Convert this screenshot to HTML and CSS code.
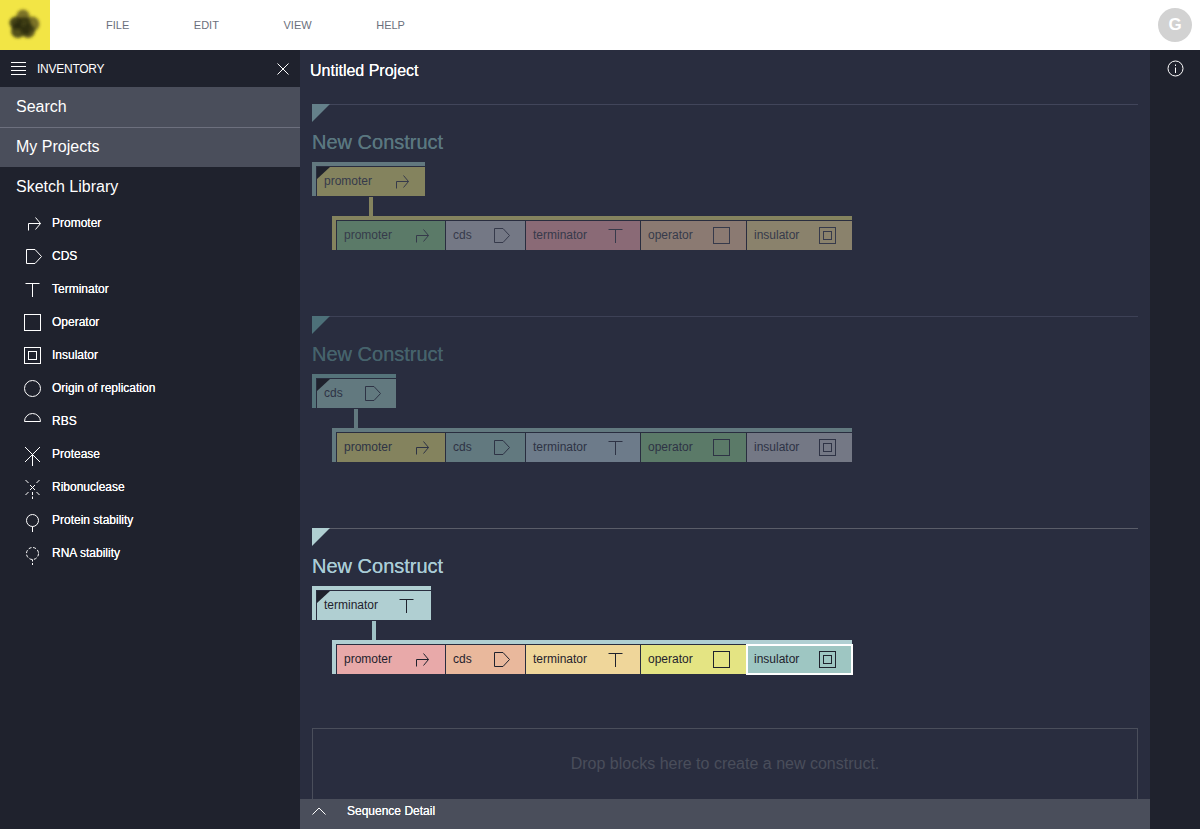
FILE: index.html
```html
<!DOCTYPE html>
<html lang="en">

<head>
  <title>Untitled Project</title>
  <meta charset="UTF-8">
  <meta name="viewport" content="width=device-width, initial-scale=1">
  <link rel="stylesheet" href="styles.css">
</head>

<body>

  <!-- icon set, used by the sidebar and the blocks -->
  <svg class="icon-defs" xmlns="http://www.w3.org/2000/svg">
    <symbol id="i-promoter" viewBox="0 0 25 25"><path d="M8.5 19.5V12.5H20.5M15.5 6.5L20.5 12.5L15.5 18.5"/></symbol>
    <symbol id="i-cds" viewBox="0 0 25 25"><path d="M6.5 5.5H15L21.5 12.5L15 19.5H6.5Z"/></symbol>
    <symbol id="i-terminator" viewBox="0 0 25 25"><path d="M5.5 6.5H19.5M12.5 6.5V20"/></symbol>
    <symbol id="i-operator" viewBox="0 0 25 25"><rect x="4.5" y="4.5" width="16" height="16"/></symbol>
    <symbol id="i-insulator" viewBox="0 0 25 25"><rect x="4.5" y="4.5" width="16" height="16"/><rect x="8.5" y="8.5" width="8" height="8"/></symbol>
    <symbol id="i-origin" viewBox="0 0 25 25"><circle cx="12.5" cy="12.5" r="8"/></symbol>
    <symbol id="i-rbs" viewBox="0 0 25 25"><path d="M4.5 12.5A8 8 0 0 1 20.5 12.5Z"/></symbol>
    <symbol id="i-protease" viewBox="0 0 25 25"><path d="M5 5L20 20M20 5L5 20M12.5 12.5V24"/></symbol>
    <symbol id="i-ribonuclease" viewBox="0 0 25 25"><path d="M10 10L15 15M15 10L10 15M5.5 5L8.5 8M19.5 5L16.5 8M5.5 20L8.5 17M19.5 20L16.5 17M12.5 17V20M12.5 21.5V24"/></symbol>
    <symbol id="i-protein" viewBox="0 0 25 25"><circle cx="12.5" cy="12.5" r="6"/><path d="M12.5 18.5V24"/></symbol>
    <symbol id="i-rna" viewBox="0 0 25 25"><circle cx="12.5" cy="12.5" r="6" stroke-dasharray="3 1.7"/><path d="M12.5 18.5V20.5M12.5 22V24"/></symbol>
  </svg>

  <header class="topbar">
    <div class="logo">
      <svg width="50" height="50" viewBox="0 0 50 50">
        <defs>
          <filter id="blur"><feGaussianBlur stdDeviation="1.4"/></filter>
        </defs>
        <g filter="url(#blur)" fill="#2b2a10">
          <circle cx="23" cy="16" r="6.5" opacity=".6"/>
          <circle cx="32" cy="24" r="7.5" opacity=".6"/>
          <circle cx="28" cy="31" r="7" opacity=".75"/>
          <circle cx="18" cy="31" r="7" opacity=".8"/>
          <circle cx="16" cy="23" r="6.5" opacity=".85"/>
          <circle cx="24" cy="24" r="7" opacity=".8"/>
          <circle cx="17" cy="25" r="3" opacity=".9"/>
          <circle cx="27" cy="32" r="3" opacity=".9"/>
        </g>
      </svg>
    </div>
    <nav class="menu">
      <a>FILE</a>
      <a>EDIT</a>
      <a>VIEW</a>
      <a>HELP</a>
    </nav>
    <div class="avatar">G</div>
  </header>

  <div class="workspace">

    <aside class="inventory">
      <div class="inventory-head">
        <svg class="hamburger" width="15" height="14" viewBox="0 0 15 14"><path d="M0 .5H15M0 4.5H15M0 8.5H15M0 12.5H15"/></svg>
        <span class="inventory-title">INVENTORY</span>
        <svg class="close" width="12" height="12" viewBox="0 0 12 12"><path d="M.5 .5L11.5 11.5M11.5 .5L.5 11.5"/></svg>
      </div>
      <div class="section active">Search</div>
      <div class="section active divided">My Projects</div>
      <div class="section">Sketch Library</div>
      <ul class="sketch-list">
        <li><svg class="icon"><use href="#i-promoter"/></svg>Promoter</li>
        <li><svg class="icon"><use href="#i-cds"/></svg>CDS</li>
        <li><svg class="icon"><use href="#i-terminator"/></svg>Terminator</li>
        <li><svg class="icon"><use href="#i-operator"/></svg>Operator</li>
        <li><svg class="icon"><use href="#i-insulator"/></svg>Insulator</li>
        <li><svg class="icon"><use href="#i-origin"/></svg>Origin of replication</li>
        <li><svg class="icon"><use href="#i-rbs"/></svg>RBS</li>
        <li><svg class="icon"><use href="#i-protease"/></svg>Protease</li>
        <li><svg class="icon"><use href="#i-ribonuclease"/></svg>Ribonuclease</li>
        <li><svg class="icon"><use href="#i-protein"/></svg>Protein stability</li>
        <li><svg class="icon"><use href="#i-rna"/></svg>RNA stability</li>
      </ul>
    </aside>

    <main class="project">
      <div class="canvas">
        <h1 class="project-title">Untitled Project</h1>

        <section class="construct c-one">
          <div class="corner"></div>
          <h2>New Construct</h2>
          <div class="head">
            <div class="rail">
              <div class="block w-promoter olive">promoter<svg class="icon"><use href="#i-promoter"/></svg></div>
            </div>
            <div class="stem"></div>
          </div>
          <div class="rail row">
            <div class="block w-promoter green">promoter<svg class="icon"><use href="#i-promoter"/></svg></div>
            <div class="block w-cds slate">cds<svg class="icon"><use href="#i-cds"/></svg></div>
            <div class="block w-terminator mauve">terminator<svg class="icon"><use href="#i-terminator"/></svg></div>
            <div class="block w-operator taupe">operator<svg class="icon"><use href="#i-operator"/></svg></div>
            <div class="block w-insulator khaki">insulator<svg class="icon"><use href="#i-insulator"/></svg></div>
          </div>
        </section>

        <section class="construct c-two">
          <div class="corner"></div>
          <h2>New Construct</h2>
          <div class="head">
            <div class="rail">
              <div class="block w-cds teal">cds<svg class="icon"><use href="#i-cds"/></svg></div>
            </div>
            <div class="stem"></div>
          </div>
          <div class="rail row">
            <div class="block w-promoter olive">promoter<svg class="icon"><use href="#i-promoter"/></svg></div>
            <div class="block w-cds teal">cds<svg class="icon"><use href="#i-cds"/></svg></div>
            <div class="block w-terminator steel">terminator<svg class="icon"><use href="#i-terminator"/></svg></div>
            <div class="block w-operator green">operator<svg class="icon"><use href="#i-operator"/></svg></div>
            <div class="block w-insulator slate">insulator<svg class="icon"><use href="#i-insulator"/></svg></div>
          </div>
        </section>

        <section class="construct c-three">
          <div class="corner"></div>
          <h2>New Construct</h2>
          <div class="head">
            <div class="rail">
              <div class="block w-terminator ice">terminator<svg class="icon"><use href="#i-terminator"/></svg></div>
            </div>
            <div class="stem"></div>
          </div>
          <div class="rail row">
            <div class="block w-promoter pink">promoter<svg class="icon"><use href="#i-promoter"/></svg></div>
            <div class="block w-cds peach">cds<svg class="icon"><use href="#i-cds"/></svg></div>
            <div class="block w-terminator sand">terminator<svg class="icon"><use href="#i-terminator"/></svg></div>
            <div class="block w-operator lemon">operator<svg class="icon"><use href="#i-operator"/></svg></div>
            <div class="block w-insulator aqua selected">insulator<svg class="icon"><use href="#i-insulator"/></svg></div>
          </div>
        </section>

        <div class="dropzone">Drop blocks here to create a new construct.</div>
      </div>

      <div class="sequence-bar">
        <svg class="chevron" width="14" height="8" viewBox="0 0 14 8"><path d="M.5 7.5L7 1L13.5 7.5"/></svg>
        <span>Sequence Detail</span>
      </div>
    </main>

    <aside class="info-rail">
      <svg class="info" width="17" height="17" viewBox="0 0 17 17">
        <circle cx="8.5" cy="8.5" r="7.5"/>
        <path d="M8.5 7.5V13M8.5 4.5V6"/>
      </svg>
    </aside>

  </div>

</body>

</html>
```

FILE: styles.css
```css
* {
  box-sizing: border-box;
}

html,
body {
  height: 100%;
}

body {
  margin: 0;
  display: flex;
  flex-direction: column;
  overflow: hidden;
  font-family: "Liberation Sans", Arial, sans-serif;
  background: #292d3f;
}

.icon-defs {
  display: none;
}

.icon {
  width: 25px;
  height: 25px;
  flex: none;
  margin-top: 2px;
  fill: none;
  stroke: currentColor;
  stroke-width: 1;
}

/* top bar */
.topbar {
  height: 50px;
  flex: none;
  display: flex;
  align-items: center;
  background: #fff;
}

.logo {
  width: 50px;
  height: 50px;
  background: #f2e545;
}

.logo svg {
  display: block;
}

.menu {
  display: flex;
  gap: 64.6px;
  padding-left: 56px;
  font-size: 11px;
  color: #6b6f7c;
}

.avatar {
  width: 34px;
  height: 34px;
  margin-left: auto;
  margin-right: 8px;
  border-radius: 50%;
  background: #d2d2d2;
  color: #fff;
  font-size: 17px;
  font-weight: bold;
  line-height: 34px;
  text-align: center;
}

.workspace {
  flex: 1;
  min-height: 0;
  display: flex;
}

/* left sidebar */
.inventory {
  width: 300px;
  flex: none;
  background: #1f222d;
  color: #fff;
}

.inventory-head {
  height: 37px;
  display: flex;
  align-items: center;
  padding: 0 11px;
  font-size: 12px;
}

.inventory-head svg {
  fill: none;
  stroke: #fff;
}

.inventory-title {
  margin-left: 11px;
  letter-spacing: -0.25px;
}

.close {
  margin-left: auto;
}

.section {
  height: 40px;
  padding-left: 16px;
  font-size: 16px;
  line-height: 39px;
}

.section.active {
  background: #4a4e5b;
}

.section.divided {
  border-top: 1px solid #6d707e;
  line-height: 37px;
}

.sketch-list {
  margin: 0;
  padding: 0 0 0 20px;
  list-style: none;
}

.sketch-list li {
  height: 33px;
  display: flex;
  align-items: center;
  gap: 7px;
  padding-bottom: 2px;
  font-size: 12px;
  text-shadow: 0 0 0.5px #fff;
}

/* project area */
.project {
  flex: 1;
  min-width: 0;
  display: flex;
  flex-direction: column;
}

.canvas {
  flex: 1;
  min-height: 0;
  overflow: hidden;
  padding: 0 12px;
}

.project-title {
  height: 54px;
  margin: 0 0 0 -2px;
  font-size: 16px;
  font-weight: normal;
  line-height: 41px;
  color: #fff;
  text-shadow: 0 0 0.6px #fff;
}

.construct {
  padding-bottom: 54px;
  border-top: 1px solid var(--line);
  color: var(--ink);
}

.construct + .construct {
  margin-top: 12px;
}

.corner {
  width: 18px;
  height: 18px;
  margin-top: -1px;
  background: var(--accent);
  clip-path: polygon(0 0, 100% 0, 0 100%);
}

.construct h2 {
  margin: 8px 0;
  font-size: 20px;
  font-weight: normal;
  line-height: 24px;
  color: var(--title);
  text-shadow: 0 0 0.6px var(--title);
}

.head {
  width: fit-content;
  display: flex;
  flex-direction: column;
}

.stem {
  width: 4px;
  height: 19px;
  margin: 1px 0 0 4px;
  align-self: center;
  background: var(--stem);
}

.rail {
  display: flex;
  width: fit-content;
  gap: 1px;
  padding: 1px 0 0 1px;
  border-top: 4px solid var(--rail);
  border-left: 4px solid var(--rail);
}

.head .rail {
  border-color: var(--rail-head);
}

.row {
  margin-left: 20px;
}

.block {
  position: relative;
  height: 29px;
  display: flex;
  align-items: center;
  justify-content: space-between;
  padding: 0 12px 2px 7px;
  font-size: 12px;
}

.head .block::before {
  content: "";
  position: absolute;
  top: 0;
  left: 0;
  width: 13px;
  height: 12px;
  background: #1f222d;
  clip-path: polygon(0 0, 100% 0, 0 100%);
}

.w-promoter { width: 108px; }
.w-cds { width: 79px; }
.w-terminator { width: 114px; }
.w-operator { width: 105px; }
.w-insulator { width: 105px; }

.c-one {
  --line: #41455a;
  --accent: #64808a;
  --title: #5a7780;
  --ink: #363a4b;
  --rail: #84835e;
  --rail-head: #62787f;
  --stem: #84835e;
}

.c-two {
  --line: #3d4156;
  --accent: #4d7079;
  --title: #46636c;
  --ink: #2e3345;
  --rail: #62797f;
  --rail-head: #55737a;
  --stem: #62797f;
}

.c-three {
  --line: #5a5d69;
  --accent: #b0cfd2;
  --title: #a9ccd6;
  --ink: #1f222d;
  --rail: #b0cfd2;
  --rail-head: #b0cfd2;
  --stem: #9fc2c6;
}

/* dimmed block colours */
.olive { background: #84835e; }
.green { background: #5b7a68; }
.slate { background: #747885; }
.mauve { background: #8a6a76; }
.taupe { background: #8b7a72; }
.khaki { background: #8a826c; }
.teal { background: #62797f; }
.steel { background: #6d7b8a; }

/* full block colours */
.ice { background: #b0cfd2; }
.pink { background: #e8a9a9; }
.peach { background: #e9b89c; }
.sand { background: #efd69a; }
.lemon { background: #e4e483; }
.aqua { background: #9ec6c2; }

.selected {
  outline: 2px solid #fff;
  outline-offset: -1px;
}

.dropzone {
  height: 100px;
  padding-top: 25px;
  border: 1px solid #4a4e5b;
  font-size: 16px;
  line-height: 19px;
  text-align: center;
  color: #4a4e5b;
}

/* bottom bar */
.sequence-bar {
  height: 30px;
  flex: none;
  display: flex;
  align-items: center;
  padding: 0 0 6px 12px;
  background: #4a4e5b;
  color: #fff;
  font-size: 12px;
  text-shadow: 0 0 0.5px #fff;
}

.chevron {
  margin-right: 21px;
  fill: none;
  stroke: #fff;
}

/* right rail */
.info-rail {
  width: 50px;
  flex: none;
  padding: 10px 0 0 17px;
  background: #1f222d;
}

.info {
  fill: none;
  stroke: #fff;
}
```
